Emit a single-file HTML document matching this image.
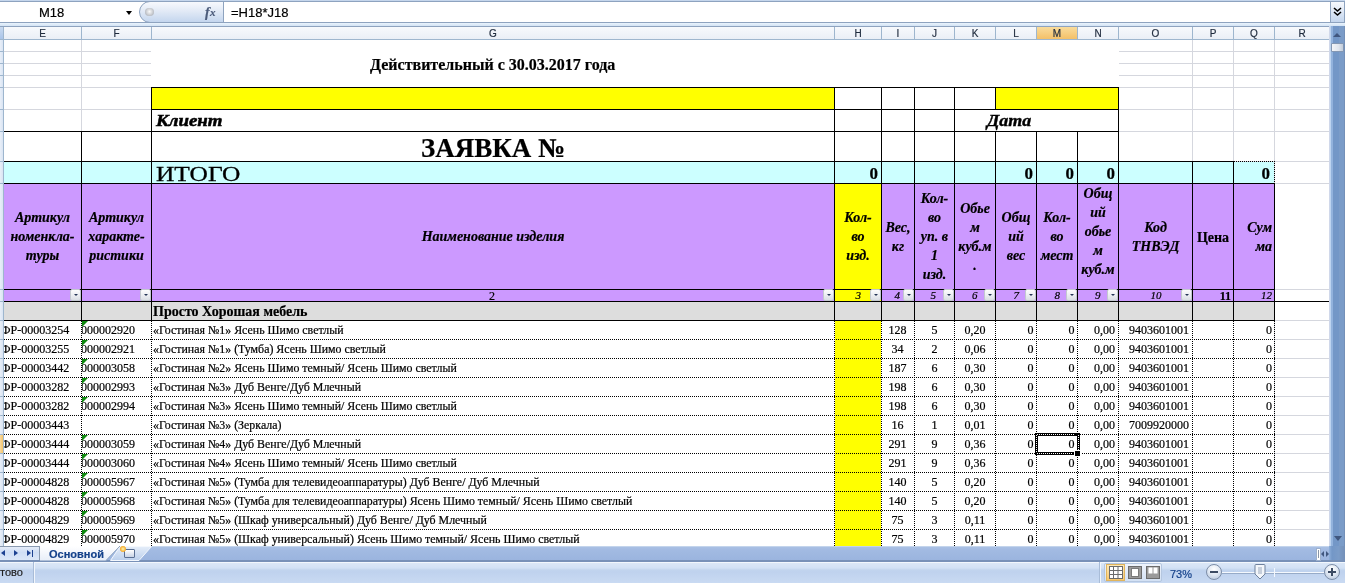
<!DOCTYPE html>
<html><head><meta charset="utf-8"><style>
html,body{margin:0;padding:0;background:#fff;}
body{width:1359px;height:583px;position:relative;overflow:hidden;}
div,svg{position:absolute;box-sizing:border-box;}
.t{white-space:nowrap;line-height:1;-webkit-text-stroke:0.2px currentColor;}
.hd{background:repeating-linear-gradient(90deg,#000 0 1px,transparent 1px 2px);}
.vd{background:repeating-linear-gradient(180deg,#000 0 1px,transparent 1px 2px);}
.bk{background:#000;}
.gl{background:#d5d7de;}
</style></head><body><div style="left:0;top:0;width:1359px;height:583px;overflow:hidden;will-change:transform">

<div style="left:0;top:0;width:1329px;height:546px;overflow:hidden">
<div style="left:0px;top:39px;width:1329px;height:507px;background:#fff"></div>
<div class="gl" style="left:4px;top:39px;width:1325px;height:1px"></div>
<div class="gl" style="left:4px;top:51px;width:1325px;height:1px"></div>
<div class="gl" style="left:4px;top:63px;width:1325px;height:1px"></div>
<div class="gl" style="left:4px;top:75px;width:1325px;height:1px"></div>
<div class="gl" style="left:4px;top:87px;width:1325px;height:1px"></div>
<div class="gl" style="left:4px;top:109px;width:1325px;height:1px"></div>
<div class="gl" style="left:4px;top:131px;width:1325px;height:1px"></div>
<div class="gl" style="left:4px;top:161px;width:1325px;height:1px"></div>
<div class="gl" style="left:4px;top:183px;width:1325px;height:1px"></div>
<div class="gl" style="left:4px;top:289px;width:1325px;height:1px"></div>
<div class="gl" style="left:4px;top:301px;width:1325px;height:1px"></div>
<div class="gl" style="left:4px;top:320px;width:1325px;height:1px"></div>
<div class="gl" style="left:4px;top:339px;width:1325px;height:1px"></div>
<div class="gl" style="left:4px;top:358px;width:1325px;height:1px"></div>
<div class="gl" style="left:4px;top:377px;width:1325px;height:1px"></div>
<div class="gl" style="left:4px;top:396px;width:1325px;height:1px"></div>
<div class="gl" style="left:4px;top:415px;width:1325px;height:1px"></div>
<div class="gl" style="left:4px;top:434px;width:1325px;height:1px"></div>
<div class="gl" style="left:4px;top:453px;width:1325px;height:1px"></div>
<div class="gl" style="left:4px;top:472px;width:1325px;height:1px"></div>
<div class="gl" style="left:4px;top:491px;width:1325px;height:1px"></div>
<div class="gl" style="left:4px;top:510px;width:1325px;height:1px"></div>
<div class="gl" style="left:4px;top:529px;width:1325px;height:1px"></div>
<div class="gl" style="left:81px;top:39px;width:1px;height:507px"></div>
<div class="gl" style="left:151px;top:39px;width:1px;height:507px"></div>
<div class="gl" style="left:834px;top:39px;width:1px;height:507px"></div>
<div class="gl" style="left:881px;top:39px;width:1px;height:507px"></div>
<div class="gl" style="left:914px;top:39px;width:1px;height:507px"></div>
<div class="gl" style="left:954px;top:39px;width:1px;height:507px"></div>
<div class="gl" style="left:995px;top:39px;width:1px;height:507px"></div>
<div class="gl" style="left:1036px;top:39px;width:1px;height:507px"></div>
<div class="gl" style="left:1077px;top:39px;width:1px;height:507px"></div>
<div class="gl" style="left:1118px;top:39px;width:1px;height:507px"></div>
<div class="gl" style="left:1192px;top:39px;width:1px;height:507px"></div>
<div class="gl" style="left:1233px;top:39px;width:1px;height:507px"></div>
<div class="gl" style="left:1274px;top:39px;width:1px;height:507px"></div>
<div style="left:151px;top:40px;width:968px;height:47px;background:#fff"></div>
<div style="left:151px;top:88px;width:967px;height:43px;background:#fff"></div>
<div style="left:152px;top:88px;width:682px;height:21px;background:#ffff00"></div>
<div style="left:996px;top:88px;width:122px;height:21px;background:#ffff00"></div>
<div style="left:152px;top:132px;width:966px;height:29px;background:#fff"></div>
<div style="left:4px;top:162px;width:1270px;height:21px;background:#ccffff"></div>
<div style="left:4px;top:184px;width:1270px;height:117px;background:#cc99ff"></div>
<div style="left:835px;top:184px;width:46px;height:117px;background:#ffff00"></div>
<div style="left:4px;top:302px;width:1270px;height:18px;background:#dddddd"></div>
<div style="left:4px;top:321px;width:1270px;height:225px;background:#fff"></div>
<div style="left:835px;top:321px;width:46px;height:225px;background:#ffff00"></div>
<div class="bk" style="left:151px;top:87px;width:968px;height:1px"></div>
<div class="bk" style="left:151px;top:109px;width:968px;height:1px"></div>
<div class="bk" style="left:4px;top:131px;width:1115px;height:1px"></div>
<div class="bk" style="left:4px;top:161px;width:1230px;height:1px"></div>
<div class="hd" style="left:1234px;top:161px;width:41px;height:1px"></div>
<div class="bk" style="left:151px;top:87px;width:1px;height:97px"></div>
<div class="bk" style="left:834px;top:87px;width:1px;height:75px"></div>
<div class="bk" style="left:881px;top:87px;width:1px;height:75px"></div>
<div class="bk" style="left:914px;top:87px;width:1px;height:75px"></div>
<div class="bk" style="left:954px;top:87px;width:1px;height:75px"></div>
<div class="bk" style="left:1118px;top:87px;width:1px;height:75px"></div>
<div class="bk" style="left:995px;top:87px;width:1px;height:23px"></div>
<div class="bk" style="left:995px;top:131px;width:1px;height:31px"></div>
<div class="bk" style="left:1036px;top:131px;width:1px;height:31px"></div>
<div class="bk" style="left:1077px;top:131px;width:1px;height:31px"></div>
<div class="bk" style="left:81px;top:131px;width:1px;height:53px"></div>
<div class="bk" style="left:834px;top:161px;width:1px;height:23px"></div>
<div class="bk" style="left:881px;top:161px;width:1px;height:23px"></div>
<div class="bk" style="left:914px;top:161px;width:1px;height:23px"></div>
<div class="bk" style="left:954px;top:161px;width:1px;height:23px"></div>
<div class="bk" style="left:995px;top:161px;width:1px;height:23px"></div>
<div class="bk" style="left:1036px;top:161px;width:1px;height:23px"></div>
<div class="bk" style="left:1077px;top:161px;width:1px;height:23px"></div>
<div class="bk" style="left:1118px;top:161px;width:1px;height:23px"></div>
<div class="bk" style="left:1192px;top:161px;width:1px;height:23px"></div>
<div class="bk" style="left:1233px;top:161px;width:1px;height:23px"></div>
<div class="vd" style="left:1274px;top:161px;width:1px;height:23px"></div>
<div class="bk" style="left:4px;top:183px;width:1271px;height:1px"></div>
<div class="bk" style="left:81px;top:183px;width:1px;height:138px"></div>
<div class="bk" style="left:151px;top:183px;width:1px;height:138px"></div>
<div class="bk" style="left:834px;top:183px;width:1px;height:138px"></div>
<div class="bk" style="left:881px;top:183px;width:1px;height:138px"></div>
<div class="bk" style="left:914px;top:183px;width:1px;height:138px"></div>
<div class="bk" style="left:954px;top:183px;width:1px;height:138px"></div>
<div class="bk" style="left:995px;top:183px;width:1px;height:138px"></div>
<div class="bk" style="left:1036px;top:183px;width:1px;height:138px"></div>
<div class="bk" style="left:1077px;top:183px;width:1px;height:138px"></div>
<div class="bk" style="left:1118px;top:183px;width:1px;height:138px"></div>
<div class="bk" style="left:1192px;top:183px;width:1px;height:138px"></div>
<div class="bk" style="left:1233px;top:183px;width:1px;height:138px"></div>
<div class="bk" style="left:1274px;top:183px;width:1px;height:138px"></div>
<div class="bk" style="left:4px;top:289px;width:1271px;height:1px"></div>
<div class="bk" style="left:0px;top:301px;width:1330px;height:1px"></div>
<div class="bk" style="left:4px;top:320px;width:1271px;height:1px"></div>
<div class="hd" style="left:4px;top:339px;width:1271px;height:1px"></div>
<div class="hd" style="left:4px;top:358px;width:1271px;height:1px"></div>
<div class="hd" style="left:4px;top:377px;width:1271px;height:1px"></div>
<div class="hd" style="left:4px;top:396px;width:1271px;height:1px"></div>
<div class="hd" style="left:4px;top:415px;width:1271px;height:1px"></div>
<div class="hd" style="left:4px;top:434px;width:1271px;height:1px"></div>
<div class="hd" style="left:4px;top:453px;width:1271px;height:1px"></div>
<div class="hd" style="left:4px;top:472px;width:1271px;height:1px"></div>
<div class="hd" style="left:4px;top:491px;width:1271px;height:1px"></div>
<div class="hd" style="left:4px;top:510px;width:1271px;height:1px"></div>
<div class="hd" style="left:4px;top:529px;width:1271px;height:1px"></div>
<div class="vd" style="left:81px;top:321px;width:1px;height:226px"></div>
<div class="vd" style="left:151px;top:321px;width:1px;height:226px"></div>
<div class="vd" style="left:834px;top:321px;width:1px;height:226px"></div>
<div class="vd" style="left:881px;top:321px;width:1px;height:226px"></div>
<div class="vd" style="left:914px;top:321px;width:1px;height:226px"></div>
<div class="vd" style="left:954px;top:321px;width:1px;height:226px"></div>
<div class="vd" style="left:995px;top:321px;width:1px;height:226px"></div>
<div class="vd" style="left:1036px;top:321px;width:1px;height:226px"></div>
<div class="vd" style="left:1077px;top:321px;width:1px;height:226px"></div>
<div class="vd" style="left:1118px;top:321px;width:1px;height:226px"></div>
<div class="vd" style="left:1192px;top:321px;width:1px;height:226px"></div>
<div class="vd" style="left:1233px;top:321px;width:1px;height:226px"></div>
<div class="vd" style="left:1274px;top:321px;width:1px;height:226px"></div>
<div style="left:70px;top:289px;width:11px;height:12px;background:linear-gradient(#fdfdfe,#dadee5);border:1px solid #c3c8d0;border-radius:2px"></div>
<div style="left:74px;top:294px;width:0;height:0;border-left:2.5px solid transparent;border-right:2.5px solid transparent;border-top:2.5px solid #243456"></div>
<div style="left:140px;top:289px;width:11px;height:12px;background:linear-gradient(#fdfdfe,#dadee5);border:1px solid #c3c8d0;border-radius:2px"></div>
<div style="left:144px;top:294px;width:0;height:0;border-left:2.5px solid transparent;border-right:2.5px solid transparent;border-top:2.5px solid #243456"></div>
<div style="left:823px;top:289px;width:11px;height:12px;background:linear-gradient(#fdfdfe,#dadee5);border:1px solid #c3c8d0;border-radius:2px"></div>
<div style="left:827px;top:294px;width:0;height:0;border-left:2.5px solid transparent;border-right:2.5px solid transparent;border-top:2.5px solid #243456"></div>
<div style="left:870px;top:289px;width:11px;height:12px;background:linear-gradient(#fdfdfe,#dadee5);border:1px solid #c3c8d0;border-radius:2px"></div>
<div style="left:874px;top:294px;width:0;height:0;border-left:2.5px solid transparent;border-right:2.5px solid transparent;border-top:2.5px solid #243456"></div>
<div style="left:903px;top:289px;width:11px;height:12px;background:linear-gradient(#fdfdfe,#dadee5);border:1px solid #c3c8d0;border-radius:2px"></div>
<div style="left:907px;top:294px;width:0;height:0;border-left:2.5px solid transparent;border-right:2.5px solid transparent;border-top:2.5px solid #243456"></div>
<div style="left:943px;top:289px;width:11px;height:12px;background:linear-gradient(#fdfdfe,#dadee5);border:1px solid #c3c8d0;border-radius:2px"></div>
<div style="left:947px;top:294px;width:0;height:0;border-left:2.5px solid transparent;border-right:2.5px solid transparent;border-top:2.5px solid #243456"></div>
<div style="left:984px;top:289px;width:11px;height:12px;background:linear-gradient(#fdfdfe,#dadee5);border:1px solid #c3c8d0;border-radius:2px"></div>
<div style="left:988px;top:294px;width:0;height:0;border-left:2.5px solid transparent;border-right:2.5px solid transparent;border-top:2.5px solid #243456"></div>
<div style="left:1025px;top:289px;width:11px;height:12px;background:linear-gradient(#fdfdfe,#dadee5);border:1px solid #c3c8d0;border-radius:2px"></div>
<div style="left:1029px;top:294px;width:0;height:0;border-left:2.5px solid transparent;border-right:2.5px solid transparent;border-top:2.5px solid #243456"></div>
<div style="left:1066px;top:289px;width:11px;height:12px;background:linear-gradient(#fdfdfe,#dadee5);border:1px solid #c3c8d0;border-radius:2px"></div>
<div style="left:1070px;top:294px;width:0;height:0;border-left:2.5px solid transparent;border-right:2.5px solid transparent;border-top:2.5px solid #243456"></div>
<div style="left:1107px;top:289px;width:11px;height:12px;background:linear-gradient(#fdfdfe,#dadee5);border:1px solid #c3c8d0;border-radius:2px"></div>
<div style="left:1111px;top:294px;width:0;height:0;border-left:2.5px solid transparent;border-right:2.5px solid transparent;border-top:2.5px solid #243456"></div>
<div style="left:1181px;top:289px;width:11px;height:12px;background:linear-gradient(#fdfdfe,#dadee5);border:1px solid #c3c8d0;border-radius:2px"></div>
<div style="left:1185px;top:294px;width:0;height:0;border-left:2.5px solid transparent;border-right:2.5px solid transparent;border-top:2.5px solid #243456"></div>
<div class="t" style="left:370px;top:57px;font-family:'Liberation Serif', serif;font-size:16px;font-weight:bold;font-style:normal;color:#000;">Действительный с 30.03.2017 года</div>
<div class="t" style="left:156px;top:113px;font-family:'Liberation Serif', serif;font-size:16px;font-weight:bold;font-style:italic;color:#000;transform:scaleX(1.18);transform-origin:0 0;-webkit-text-stroke:0.5px #000">Клиент</div>
<div class="t" style="left:987px;top:113px;font-family:'Liberation Serif', serif;font-size:16px;font-weight:bold;font-style:italic;color:#000;transform:scaleX(1.12);transform-origin:0 0;-webkit-text-stroke:0.4px #000">Дата</div>
<div class="t" style="left:193px;width:600px;text-align:center;top:135px;font-family:'Liberation Serif', serif;font-size:27px;font-weight:bold;font-style:normal;color:#000;">ЗАЯВКА №</div>
<div class="t" style="left:156px;top:163px;font-family:'Liberation Serif', serif;font-size:22px;font-weight:normal;font-style:normal;color:#000;transform:scaleX(1.155);transform-origin:0 0;-webkit-text-stroke:0.3px #000">ИТОГО</div>
<div class="t" style="left:378px;width:500px;text-align:right;top:165px;font-family:'Liberation Serif', serif;font-size:17px;font-weight:bold;font-style:normal;color:#000;">0</div>
<div class="t" style="left:533px;width:500px;text-align:right;top:165px;font-family:'Liberation Serif', serif;font-size:17px;font-weight:bold;font-style:normal;color:#000;">0</div>
<div class="t" style="left:574px;width:500px;text-align:right;top:165px;font-family:'Liberation Serif', serif;font-size:17px;font-weight:bold;font-style:normal;color:#000;">0</div>
<div class="t" style="left:615px;width:500px;text-align:right;top:165px;font-family:'Liberation Serif', serif;font-size:17px;font-weight:bold;font-style:normal;color:#000;">0</div>
<div class="t" style="left:770px;width:500px;text-align:right;top:165px;font-family:'Liberation Serif', serif;font-size:17px;font-weight:bold;font-style:normal;color:#000;">0</div>
<div class="t" style="left:-257.5px;width:600px;text-align:center;top:211px;font-family:'Liberation Serif', serif;font-size:14px;font-weight:bold;font-style:italic;color:#000;">Артикул</div>
<div class="t" style="left:-257.5px;width:600px;text-align:center;top:230px;font-family:'Liberation Serif', serif;font-size:14px;font-weight:bold;font-style:italic;color:#000;">номенкла-</div>
<div class="t" style="left:-257.5px;width:600px;text-align:center;top:249px;font-family:'Liberation Serif', serif;font-size:14px;font-weight:bold;font-style:italic;color:#000;">туры</div>
<div class="t" style="left:-183.5px;width:600px;text-align:center;top:211px;font-family:'Liberation Serif', serif;font-size:14px;font-weight:bold;font-style:italic;color:#000;">Артикул</div>
<div class="t" style="left:-183.5px;width:600px;text-align:center;top:230px;font-family:'Liberation Serif', serif;font-size:14px;font-weight:bold;font-style:italic;color:#000;">характе-</div>
<div class="t" style="left:-183.5px;width:600px;text-align:center;top:249px;font-family:'Liberation Serif', serif;font-size:14px;font-weight:bold;font-style:italic;color:#000;">ристики</div>
<div class="t" style="left:193.0px;width:600px;text-align:center;top:230px;font-family:'Liberation Serif', serif;font-size:14px;font-weight:bold;font-style:italic;color:#000;">Наименование изделия</div>
<div class="t" style="left:558.0px;width:600px;text-align:center;top:211px;font-family:'Liberation Serif', serif;font-size:14px;font-weight:bold;font-style:italic;color:#000;">Кол-</div>
<div class="t" style="left:558.0px;width:600px;text-align:center;top:230px;font-family:'Liberation Serif', serif;font-size:14px;font-weight:bold;font-style:italic;color:#000;">во</div>
<div class="t" style="left:558.0px;width:600px;text-align:center;top:249px;font-family:'Liberation Serif', serif;font-size:14px;font-weight:bold;font-style:italic;color:#000;">изд.</div>
<div class="t" style="left:598.0px;width:600px;text-align:center;top:221px;font-family:'Liberation Serif', serif;font-size:14px;font-weight:bold;font-style:italic;color:#000;">Вес,</div>
<div class="t" style="left:598.0px;width:600px;text-align:center;top:240px;font-family:'Liberation Serif', serif;font-size:14px;font-weight:bold;font-style:italic;color:#000;">кг</div>
<div class="t" style="left:634.5px;width:600px;text-align:center;top:192px;font-family:'Liberation Serif', serif;font-size:14px;font-weight:bold;font-style:italic;color:#000;">Кол-</div>
<div class="t" style="left:634.5px;width:600px;text-align:center;top:211px;font-family:'Liberation Serif', serif;font-size:14px;font-weight:bold;font-style:italic;color:#000;">во</div>
<div class="t" style="left:634.5px;width:600px;text-align:center;top:230px;font-family:'Liberation Serif', serif;font-size:14px;font-weight:bold;font-style:italic;color:#000;">уп. в</div>
<div class="t" style="left:634.5px;width:600px;text-align:center;top:249px;font-family:'Liberation Serif', serif;font-size:14px;font-weight:bold;font-style:italic;color:#000;">1</div>
<div class="t" style="left:634.5px;width:600px;text-align:center;top:268px;font-family:'Liberation Serif', serif;font-size:14px;font-weight:bold;font-style:italic;color:#000;">изд.</div>
<div class="t" style="left:675.0px;width:600px;text-align:center;top:202px;font-family:'Liberation Serif', serif;font-size:14px;font-weight:bold;font-style:italic;color:#000;">Обье</div>
<div class="t" style="left:675.0px;width:600px;text-align:center;top:221px;font-family:'Liberation Serif', serif;font-size:14px;font-weight:bold;font-style:italic;color:#000;">м</div>
<div class="t" style="left:675.0px;width:600px;text-align:center;top:240px;font-family:'Liberation Serif', serif;font-size:14px;font-weight:bold;font-style:italic;color:#000;">куб.м</div>
<div class="t" style="left:675.0px;width:600px;text-align:center;top:259px;font-family:'Liberation Serif', serif;font-size:14px;font-weight:bold;font-style:italic;color:#000;">.</div>
<div class="t" style="left:716.0px;width:600px;text-align:center;top:211px;font-family:'Liberation Serif', serif;font-size:14px;font-weight:bold;font-style:italic;color:#000;">Общ</div>
<div class="t" style="left:716.0px;width:600px;text-align:center;top:230px;font-family:'Liberation Serif', serif;font-size:14px;font-weight:bold;font-style:italic;color:#000;">ий</div>
<div class="t" style="left:716.0px;width:600px;text-align:center;top:249px;font-family:'Liberation Serif', serif;font-size:14px;font-weight:bold;font-style:italic;color:#000;">вес</div>
<div class="t" style="left:757.0px;width:600px;text-align:center;top:211px;font-family:'Liberation Serif', serif;font-size:14px;font-weight:bold;font-style:italic;color:#000;">Кол-</div>
<div class="t" style="left:757.0px;width:600px;text-align:center;top:230px;font-family:'Liberation Serif', serif;font-size:14px;font-weight:bold;font-style:italic;color:#000;">во</div>
<div class="t" style="left:757.0px;width:600px;text-align:center;top:249px;font-family:'Liberation Serif', serif;font-size:14px;font-weight:bold;font-style:italic;color:#000;">мест</div>
<div class="t" style="left:798.0px;width:600px;text-align:center;top:187px;font-family:'Liberation Serif', serif;font-size:14px;font-weight:bold;font-style:italic;color:#000;">Общ</div>
<div class="t" style="left:798.0px;width:600px;text-align:center;top:206px;font-family:'Liberation Serif', serif;font-size:14px;font-weight:bold;font-style:italic;color:#000;">ий</div>
<div class="t" style="left:798.0px;width:600px;text-align:center;top:225px;font-family:'Liberation Serif', serif;font-size:14px;font-weight:bold;font-style:italic;color:#000;">обье</div>
<div class="t" style="left:798.0px;width:600px;text-align:center;top:244px;font-family:'Liberation Serif', serif;font-size:14px;font-weight:bold;font-style:italic;color:#000;">м</div>
<div class="t" style="left:798.0px;width:600px;text-align:center;top:263px;font-family:'Liberation Serif', serif;font-size:14px;font-weight:bold;font-style:italic;color:#000;">куб.м</div>
<div class="t" style="left:855.5px;width:600px;text-align:center;top:221px;font-family:'Liberation Serif', serif;font-size:14px;font-weight:bold;font-style:italic;color:#000;">Код</div>
<div class="t" style="left:855.5px;width:600px;text-align:center;top:240px;font-family:'Liberation Serif', serif;font-size:14px;font-weight:bold;font-style:italic;color:#000;">ТНВЭД</div>
<div class="t" style="left:913.0px;width:600px;text-align:center;top:231px;font-family:'Liberation Serif', serif;font-size:14px;font-weight:bold;font-style:normal;color:#000;">Цена</div>
<div class="t" style="left:772px;width:500px;text-align:right;top:221px;font-family:'Liberation Serif', serif;font-size:14px;font-weight:bold;font-style:italic;color:#000;">Сум</div>
<div class="t" style="left:772px;width:500px;text-align:right;top:240px;font-family:'Liberation Serif', serif;font-size:14px;font-weight:bold;font-style:italic;color:#000;">ма</div>
<div class="t" style="left:192px;width:600px;text-align:center;top:290px;font-family:'Liberation Serif', serif;font-size:12px;font-weight:normal;font-style:normal;color:#000;">2</div>
<div class="t" style="left:361px;width:500px;text-align:right;top:290px;font-family:'Liberation Serif', serif;font-size:11px;font-weight:normal;font-style:italic;color:#000;">3</div>
<div class="t" style="left:400px;width:500px;text-align:right;top:290px;font-family:'Liberation Serif', serif;font-size:11px;font-weight:normal;font-style:italic;color:#000;">4</div>
<div class="t" style="left:436px;width:500px;text-align:right;top:290px;font-family:'Liberation Serif', serif;font-size:11px;font-weight:normal;font-style:italic;color:#000;">5</div>
<div class="t" style="left:477.5px;width:500px;text-align:right;top:290px;font-family:'Liberation Serif', serif;font-size:11px;font-weight:normal;font-style:italic;color:#000;">6</div>
<div class="t" style="left:519px;width:500px;text-align:right;top:290px;font-family:'Liberation Serif', serif;font-size:11px;font-weight:normal;font-style:italic;color:#000;">7</div>
<div class="t" style="left:560px;width:500px;text-align:right;top:290px;font-family:'Liberation Serif', serif;font-size:11px;font-weight:normal;font-style:italic;color:#000;">8</div>
<div class="t" style="left:600.5px;width:500px;text-align:right;top:290px;font-family:'Liberation Serif', serif;font-size:11px;font-weight:normal;font-style:italic;color:#000;">9</div>
<div class="t" style="left:856px;width:600px;text-align:center;top:290px;font-family:'Liberation Serif', serif;font-size:11px;font-weight:normal;font-style:italic;color:#000;">10</div>
<div class="t" style="left:731px;width:500px;text-align:right;top:290px;font-family:'Liberation Serif', serif;font-size:12px;font-weight:bold;font-style:normal;color:#000;">11</div>
<div class="t" style="left:772px;width:500px;text-align:right;top:290px;font-family:'Liberation Serif', serif;font-size:11px;font-weight:normal;font-style:italic;color:#000;">12</div>
<div class="t" style="left:153px;top:305px;font-family:'Liberation Serif', serif;font-size:14px;font-weight:bold;font-style:normal;color:#000;">Просто Хорошая мебель</div>
<div style="left:4px;top:321px;width:77px;height:18px;overflow:hidden"><div class="t" style="left:-3px;top:3px;font-family:'Liberation Serif', serif;font-size:12px">ФР-00003254</div></div>
<div style="left:82px;top:321px;width:69px;height:18px;overflow:hidden"><div class="t" style="right:16px;top:3px;font-family:'Liberation Serif', serif;font-size:12px">000002920</div></div>
<div style="left:82px;top:321px;width:0;height:0;border-top:6px solid #108a10;border-right:6px solid transparent"></div>
<div class="t" style="left:153px;top:325px;font-family:'Liberation Serif', serif;font-size:11.9px;font-weight:normal;font-style:normal;color:#000;">«Гостиная №1» Ясень Шимо светлый</div>
<div class="t" style="left:597.5px;width:600px;text-align:center;top:324px;font-family:'Liberation Serif', serif;font-size:12px;font-weight:normal;font-style:normal;color:#000;">128</div>
<div class="t" style="left:634.5px;width:600px;text-align:center;top:324px;font-family:'Liberation Serif', serif;font-size:12px;font-weight:normal;font-style:normal;color:#000;">5</div>
<div class="t" style="left:675px;width:600px;text-align:center;top:324px;font-family:'Liberation Serif', serif;font-size:12px;font-weight:normal;font-style:normal;color:#000;">0,20</div>
<div class="t" style="left:533.5px;width:500px;text-align:right;top:324px;font-family:'Liberation Serif', serif;font-size:12px;font-weight:normal;font-style:normal;color:#000;">0</div>
<div class="t" style="left:574.5px;width:500px;text-align:right;top:324px;font-family:'Liberation Serif', serif;font-size:12px;font-weight:normal;font-style:normal;color:#000;">0</div>
<div class="t" style="left:615px;width:500px;text-align:right;top:324px;font-family:'Liberation Serif', serif;font-size:12px;font-weight:normal;font-style:normal;color:#000;">0,00</div>
<div class="t" style="left:859px;width:600px;text-align:center;top:324px;font-family:'Liberation Serif', serif;font-size:12px;font-weight:normal;font-style:normal;color:#000;">9403601001</div>
<div class="t" style="left:772px;width:500px;text-align:right;top:324px;font-family:'Liberation Serif', serif;font-size:12px;font-weight:normal;font-style:normal;color:#000;">0</div>
<div style="left:4px;top:340px;width:77px;height:18px;overflow:hidden"><div class="t" style="left:-3px;top:3px;font-family:'Liberation Serif', serif;font-size:12px">ФР-00003255</div></div>
<div style="left:82px;top:340px;width:69px;height:18px;overflow:hidden"><div class="t" style="right:16px;top:3px;font-family:'Liberation Serif', serif;font-size:12px">000002921</div></div>
<div style="left:82px;top:340px;width:0;height:0;border-top:6px solid #108a10;border-right:6px solid transparent"></div>
<div class="t" style="left:153px;top:344px;font-family:'Liberation Serif', serif;font-size:11.9px;font-weight:normal;font-style:normal;color:#000;">«Гостиная №1» (Тумба) Ясень Шимо светлый</div>
<div class="t" style="left:597.5px;width:600px;text-align:center;top:343px;font-family:'Liberation Serif', serif;font-size:12px;font-weight:normal;font-style:normal;color:#000;">34</div>
<div class="t" style="left:634.5px;width:600px;text-align:center;top:343px;font-family:'Liberation Serif', serif;font-size:12px;font-weight:normal;font-style:normal;color:#000;">2</div>
<div class="t" style="left:675px;width:600px;text-align:center;top:343px;font-family:'Liberation Serif', serif;font-size:12px;font-weight:normal;font-style:normal;color:#000;">0,06</div>
<div class="t" style="left:533.5px;width:500px;text-align:right;top:343px;font-family:'Liberation Serif', serif;font-size:12px;font-weight:normal;font-style:normal;color:#000;">0</div>
<div class="t" style="left:574.5px;width:500px;text-align:right;top:343px;font-family:'Liberation Serif', serif;font-size:12px;font-weight:normal;font-style:normal;color:#000;">0</div>
<div class="t" style="left:615px;width:500px;text-align:right;top:343px;font-family:'Liberation Serif', serif;font-size:12px;font-weight:normal;font-style:normal;color:#000;">0,00</div>
<div class="t" style="left:859px;width:600px;text-align:center;top:343px;font-family:'Liberation Serif', serif;font-size:12px;font-weight:normal;font-style:normal;color:#000;">9403601001</div>
<div class="t" style="left:772px;width:500px;text-align:right;top:343px;font-family:'Liberation Serif', serif;font-size:12px;font-weight:normal;font-style:normal;color:#000;">0</div>
<div style="left:4px;top:359px;width:77px;height:18px;overflow:hidden"><div class="t" style="left:-3px;top:3px;font-family:'Liberation Serif', serif;font-size:12px">ФР-00003442</div></div>
<div style="left:82px;top:359px;width:69px;height:18px;overflow:hidden"><div class="t" style="right:16px;top:3px;font-family:'Liberation Serif', serif;font-size:12px">000003058</div></div>
<div style="left:82px;top:359px;width:0;height:0;border-top:6px solid #108a10;border-right:6px solid transparent"></div>
<div class="t" style="left:153px;top:363px;font-family:'Liberation Serif', serif;font-size:11.9px;font-weight:normal;font-style:normal;color:#000;">«Гостиная №2» Ясень Шимо темный/ Ясень Шимо светлый</div>
<div class="t" style="left:597.5px;width:600px;text-align:center;top:362px;font-family:'Liberation Serif', serif;font-size:12px;font-weight:normal;font-style:normal;color:#000;">187</div>
<div class="t" style="left:634.5px;width:600px;text-align:center;top:362px;font-family:'Liberation Serif', serif;font-size:12px;font-weight:normal;font-style:normal;color:#000;">6</div>
<div class="t" style="left:675px;width:600px;text-align:center;top:362px;font-family:'Liberation Serif', serif;font-size:12px;font-weight:normal;font-style:normal;color:#000;">0,30</div>
<div class="t" style="left:533.5px;width:500px;text-align:right;top:362px;font-family:'Liberation Serif', serif;font-size:12px;font-weight:normal;font-style:normal;color:#000;">0</div>
<div class="t" style="left:574.5px;width:500px;text-align:right;top:362px;font-family:'Liberation Serif', serif;font-size:12px;font-weight:normal;font-style:normal;color:#000;">0</div>
<div class="t" style="left:615px;width:500px;text-align:right;top:362px;font-family:'Liberation Serif', serif;font-size:12px;font-weight:normal;font-style:normal;color:#000;">0,00</div>
<div class="t" style="left:859px;width:600px;text-align:center;top:362px;font-family:'Liberation Serif', serif;font-size:12px;font-weight:normal;font-style:normal;color:#000;">9403601001</div>
<div class="t" style="left:772px;width:500px;text-align:right;top:362px;font-family:'Liberation Serif', serif;font-size:12px;font-weight:normal;font-style:normal;color:#000;">0</div>
<div style="left:4px;top:378px;width:77px;height:18px;overflow:hidden"><div class="t" style="left:-3px;top:3px;font-family:'Liberation Serif', serif;font-size:12px">ФР-00003282</div></div>
<div style="left:82px;top:378px;width:69px;height:18px;overflow:hidden"><div class="t" style="right:16px;top:3px;font-family:'Liberation Serif', serif;font-size:12px">000002993</div></div>
<div style="left:82px;top:378px;width:0;height:0;border-top:6px solid #108a10;border-right:6px solid transparent"></div>
<div class="t" style="left:153px;top:382px;font-family:'Liberation Serif', serif;font-size:11.9px;font-weight:normal;font-style:normal;color:#000;">«Гостиная №3» Дуб Венге/Дуб Млечный</div>
<div class="t" style="left:597.5px;width:600px;text-align:center;top:381px;font-family:'Liberation Serif', serif;font-size:12px;font-weight:normal;font-style:normal;color:#000;">198</div>
<div class="t" style="left:634.5px;width:600px;text-align:center;top:381px;font-family:'Liberation Serif', serif;font-size:12px;font-weight:normal;font-style:normal;color:#000;">6</div>
<div class="t" style="left:675px;width:600px;text-align:center;top:381px;font-family:'Liberation Serif', serif;font-size:12px;font-weight:normal;font-style:normal;color:#000;">0,30</div>
<div class="t" style="left:533.5px;width:500px;text-align:right;top:381px;font-family:'Liberation Serif', serif;font-size:12px;font-weight:normal;font-style:normal;color:#000;">0</div>
<div class="t" style="left:574.5px;width:500px;text-align:right;top:381px;font-family:'Liberation Serif', serif;font-size:12px;font-weight:normal;font-style:normal;color:#000;">0</div>
<div class="t" style="left:615px;width:500px;text-align:right;top:381px;font-family:'Liberation Serif', serif;font-size:12px;font-weight:normal;font-style:normal;color:#000;">0,00</div>
<div class="t" style="left:859px;width:600px;text-align:center;top:381px;font-family:'Liberation Serif', serif;font-size:12px;font-weight:normal;font-style:normal;color:#000;">9403601001</div>
<div class="t" style="left:772px;width:500px;text-align:right;top:381px;font-family:'Liberation Serif', serif;font-size:12px;font-weight:normal;font-style:normal;color:#000;">0</div>
<div style="left:4px;top:397px;width:77px;height:18px;overflow:hidden"><div class="t" style="left:-3px;top:3px;font-family:'Liberation Serif', serif;font-size:12px">ФР-00003282</div></div>
<div style="left:82px;top:397px;width:69px;height:18px;overflow:hidden"><div class="t" style="right:16px;top:3px;font-family:'Liberation Serif', serif;font-size:12px">000002994</div></div>
<div style="left:82px;top:397px;width:0;height:0;border-top:6px solid #108a10;border-right:6px solid transparent"></div>
<div class="t" style="left:153px;top:401px;font-family:'Liberation Serif', serif;font-size:11.9px;font-weight:normal;font-style:normal;color:#000;">«Гостиная №3» Ясень Шимо темный/ Ясень Шимо светлый</div>
<div class="t" style="left:597.5px;width:600px;text-align:center;top:400px;font-family:'Liberation Serif', serif;font-size:12px;font-weight:normal;font-style:normal;color:#000;">198</div>
<div class="t" style="left:634.5px;width:600px;text-align:center;top:400px;font-family:'Liberation Serif', serif;font-size:12px;font-weight:normal;font-style:normal;color:#000;">6</div>
<div class="t" style="left:675px;width:600px;text-align:center;top:400px;font-family:'Liberation Serif', serif;font-size:12px;font-weight:normal;font-style:normal;color:#000;">0,30</div>
<div class="t" style="left:533.5px;width:500px;text-align:right;top:400px;font-family:'Liberation Serif', serif;font-size:12px;font-weight:normal;font-style:normal;color:#000;">0</div>
<div class="t" style="left:574.5px;width:500px;text-align:right;top:400px;font-family:'Liberation Serif', serif;font-size:12px;font-weight:normal;font-style:normal;color:#000;">0</div>
<div class="t" style="left:615px;width:500px;text-align:right;top:400px;font-family:'Liberation Serif', serif;font-size:12px;font-weight:normal;font-style:normal;color:#000;">0,00</div>
<div class="t" style="left:859px;width:600px;text-align:center;top:400px;font-family:'Liberation Serif', serif;font-size:12px;font-weight:normal;font-style:normal;color:#000;">9403601001</div>
<div class="t" style="left:772px;width:500px;text-align:right;top:400px;font-family:'Liberation Serif', serif;font-size:12px;font-weight:normal;font-style:normal;color:#000;">0</div>
<div style="left:4px;top:416px;width:77px;height:18px;overflow:hidden"><div class="t" style="left:-3px;top:3px;font-family:'Liberation Serif', serif;font-size:12px">ФР-00003443</div></div>
<div class="t" style="left:153px;top:420px;font-family:'Liberation Serif', serif;font-size:11.9px;font-weight:normal;font-style:normal;color:#000;">«Гостиная №3» (Зеркала)</div>
<div class="t" style="left:597.5px;width:600px;text-align:center;top:419px;font-family:'Liberation Serif', serif;font-size:12px;font-weight:normal;font-style:normal;color:#000;">16</div>
<div class="t" style="left:634.5px;width:600px;text-align:center;top:419px;font-family:'Liberation Serif', serif;font-size:12px;font-weight:normal;font-style:normal;color:#000;">1</div>
<div class="t" style="left:675px;width:600px;text-align:center;top:419px;font-family:'Liberation Serif', serif;font-size:12px;font-weight:normal;font-style:normal;color:#000;">0,01</div>
<div class="t" style="left:533.5px;width:500px;text-align:right;top:419px;font-family:'Liberation Serif', serif;font-size:12px;font-weight:normal;font-style:normal;color:#000;">0</div>
<div class="t" style="left:574.5px;width:500px;text-align:right;top:419px;font-family:'Liberation Serif', serif;font-size:12px;font-weight:normal;font-style:normal;color:#000;">0</div>
<div class="t" style="left:615px;width:500px;text-align:right;top:419px;font-family:'Liberation Serif', serif;font-size:12px;font-weight:normal;font-style:normal;color:#000;">0,00</div>
<div class="t" style="left:859px;width:600px;text-align:center;top:419px;font-family:'Liberation Serif', serif;font-size:12px;font-weight:normal;font-style:normal;color:#000;">7009920000</div>
<div class="t" style="left:772px;width:500px;text-align:right;top:419px;font-family:'Liberation Serif', serif;font-size:12px;font-weight:normal;font-style:normal;color:#000;">0</div>
<div style="left:4px;top:435px;width:77px;height:18px;overflow:hidden"><div class="t" style="left:-3px;top:3px;font-family:'Liberation Serif', serif;font-size:12px">ФР-00003444</div></div>
<div style="left:82px;top:435px;width:69px;height:18px;overflow:hidden"><div class="t" style="right:16px;top:3px;font-family:'Liberation Serif', serif;font-size:12px">000003059</div></div>
<div style="left:82px;top:435px;width:0;height:0;border-top:6px solid #108a10;border-right:6px solid transparent"></div>
<div class="t" style="left:153px;top:439px;font-family:'Liberation Serif', serif;font-size:11.9px;font-weight:normal;font-style:normal;color:#000;">«Гостиная №4» Дуб Венге/Дуб Млечный</div>
<div class="t" style="left:597.5px;width:600px;text-align:center;top:438px;font-family:'Liberation Serif', serif;font-size:12px;font-weight:normal;font-style:normal;color:#000;">291</div>
<div class="t" style="left:634.5px;width:600px;text-align:center;top:438px;font-family:'Liberation Serif', serif;font-size:12px;font-weight:normal;font-style:normal;color:#000;">9</div>
<div class="t" style="left:675px;width:600px;text-align:center;top:438px;font-family:'Liberation Serif', serif;font-size:12px;font-weight:normal;font-style:normal;color:#000;">0,36</div>
<div class="t" style="left:533.5px;width:500px;text-align:right;top:438px;font-family:'Liberation Serif', serif;font-size:12px;font-weight:normal;font-style:normal;color:#000;">0</div>
<div class="t" style="left:574.5px;width:500px;text-align:right;top:438px;font-family:'Liberation Serif', serif;font-size:12px;font-weight:normal;font-style:normal;color:#000;">0</div>
<div class="t" style="left:615px;width:500px;text-align:right;top:438px;font-family:'Liberation Serif', serif;font-size:12px;font-weight:normal;font-style:normal;color:#000;">0,00</div>
<div class="t" style="left:859px;width:600px;text-align:center;top:438px;font-family:'Liberation Serif', serif;font-size:12px;font-weight:normal;font-style:normal;color:#000;">9403601001</div>
<div class="t" style="left:772px;width:500px;text-align:right;top:438px;font-family:'Liberation Serif', serif;font-size:12px;font-weight:normal;font-style:normal;color:#000;">0</div>
<div style="left:4px;top:454px;width:77px;height:18px;overflow:hidden"><div class="t" style="left:-3px;top:3px;font-family:'Liberation Serif', serif;font-size:12px">ФР-00003444</div></div>
<div style="left:82px;top:454px;width:69px;height:18px;overflow:hidden"><div class="t" style="right:16px;top:3px;font-family:'Liberation Serif', serif;font-size:12px">000003060</div></div>
<div style="left:82px;top:454px;width:0;height:0;border-top:6px solid #108a10;border-right:6px solid transparent"></div>
<div class="t" style="left:153px;top:458px;font-family:'Liberation Serif', serif;font-size:11.9px;font-weight:normal;font-style:normal;color:#000;">«Гостиная №4» Ясень Шимо темный/ Ясень Шимо светлый</div>
<div class="t" style="left:597.5px;width:600px;text-align:center;top:457px;font-family:'Liberation Serif', serif;font-size:12px;font-weight:normal;font-style:normal;color:#000;">291</div>
<div class="t" style="left:634.5px;width:600px;text-align:center;top:457px;font-family:'Liberation Serif', serif;font-size:12px;font-weight:normal;font-style:normal;color:#000;">9</div>
<div class="t" style="left:675px;width:600px;text-align:center;top:457px;font-family:'Liberation Serif', serif;font-size:12px;font-weight:normal;font-style:normal;color:#000;">0,36</div>
<div class="t" style="left:533.5px;width:500px;text-align:right;top:457px;font-family:'Liberation Serif', serif;font-size:12px;font-weight:normal;font-style:normal;color:#000;">0</div>
<div class="t" style="left:574.5px;width:500px;text-align:right;top:457px;font-family:'Liberation Serif', serif;font-size:12px;font-weight:normal;font-style:normal;color:#000;">0</div>
<div class="t" style="left:615px;width:500px;text-align:right;top:457px;font-family:'Liberation Serif', serif;font-size:12px;font-weight:normal;font-style:normal;color:#000;">0,00</div>
<div class="t" style="left:859px;width:600px;text-align:center;top:457px;font-family:'Liberation Serif', serif;font-size:12px;font-weight:normal;font-style:normal;color:#000;">9403601001</div>
<div class="t" style="left:772px;width:500px;text-align:right;top:457px;font-family:'Liberation Serif', serif;font-size:12px;font-weight:normal;font-style:normal;color:#000;">0</div>
<div style="left:4px;top:473px;width:77px;height:18px;overflow:hidden"><div class="t" style="left:-3px;top:3px;font-family:'Liberation Serif', serif;font-size:12px">ФР-00004828</div></div>
<div style="left:82px;top:473px;width:69px;height:18px;overflow:hidden"><div class="t" style="right:16px;top:3px;font-family:'Liberation Serif', serif;font-size:12px">000005967</div></div>
<div style="left:82px;top:473px;width:0;height:0;border-top:6px solid #108a10;border-right:6px solid transparent"></div>
<div class="t" style="left:153px;top:477px;font-family:'Liberation Serif', serif;font-size:11.9px;font-weight:normal;font-style:normal;color:#000;">«Гостиная №5» (Тумба для телевидеоаппаратуры) Дуб Венге/ Дуб Млечный</div>
<div class="t" style="left:597.5px;width:600px;text-align:center;top:476px;font-family:'Liberation Serif', serif;font-size:12px;font-weight:normal;font-style:normal;color:#000;">140</div>
<div class="t" style="left:634.5px;width:600px;text-align:center;top:476px;font-family:'Liberation Serif', serif;font-size:12px;font-weight:normal;font-style:normal;color:#000;">5</div>
<div class="t" style="left:675px;width:600px;text-align:center;top:476px;font-family:'Liberation Serif', serif;font-size:12px;font-weight:normal;font-style:normal;color:#000;">0,20</div>
<div class="t" style="left:533.5px;width:500px;text-align:right;top:476px;font-family:'Liberation Serif', serif;font-size:12px;font-weight:normal;font-style:normal;color:#000;">0</div>
<div class="t" style="left:574.5px;width:500px;text-align:right;top:476px;font-family:'Liberation Serif', serif;font-size:12px;font-weight:normal;font-style:normal;color:#000;">0</div>
<div class="t" style="left:615px;width:500px;text-align:right;top:476px;font-family:'Liberation Serif', serif;font-size:12px;font-weight:normal;font-style:normal;color:#000;">0,00</div>
<div class="t" style="left:859px;width:600px;text-align:center;top:476px;font-family:'Liberation Serif', serif;font-size:12px;font-weight:normal;font-style:normal;color:#000;">9403601001</div>
<div class="t" style="left:772px;width:500px;text-align:right;top:476px;font-family:'Liberation Serif', serif;font-size:12px;font-weight:normal;font-style:normal;color:#000;">0</div>
<div style="left:4px;top:492px;width:77px;height:18px;overflow:hidden"><div class="t" style="left:-3px;top:3px;font-family:'Liberation Serif', serif;font-size:12px">ФР-00004828</div></div>
<div style="left:82px;top:492px;width:69px;height:18px;overflow:hidden"><div class="t" style="right:16px;top:3px;font-family:'Liberation Serif', serif;font-size:12px">000005968</div></div>
<div style="left:82px;top:492px;width:0;height:0;border-top:6px solid #108a10;border-right:6px solid transparent"></div>
<div class="t" style="left:153px;top:496px;font-family:'Liberation Serif', serif;font-size:11.9px;font-weight:normal;font-style:normal;color:#000;">«Гостиная №5» (Тумба для телевидеоаппаратуры) Ясень Шимо темный/ Ясень Шимо светлый</div>
<div class="t" style="left:597.5px;width:600px;text-align:center;top:495px;font-family:'Liberation Serif', serif;font-size:12px;font-weight:normal;font-style:normal;color:#000;">140</div>
<div class="t" style="left:634.5px;width:600px;text-align:center;top:495px;font-family:'Liberation Serif', serif;font-size:12px;font-weight:normal;font-style:normal;color:#000;">5</div>
<div class="t" style="left:675px;width:600px;text-align:center;top:495px;font-family:'Liberation Serif', serif;font-size:12px;font-weight:normal;font-style:normal;color:#000;">0,20</div>
<div class="t" style="left:533.5px;width:500px;text-align:right;top:495px;font-family:'Liberation Serif', serif;font-size:12px;font-weight:normal;font-style:normal;color:#000;">0</div>
<div class="t" style="left:574.5px;width:500px;text-align:right;top:495px;font-family:'Liberation Serif', serif;font-size:12px;font-weight:normal;font-style:normal;color:#000;">0</div>
<div class="t" style="left:615px;width:500px;text-align:right;top:495px;font-family:'Liberation Serif', serif;font-size:12px;font-weight:normal;font-style:normal;color:#000;">0,00</div>
<div class="t" style="left:859px;width:600px;text-align:center;top:495px;font-family:'Liberation Serif', serif;font-size:12px;font-weight:normal;font-style:normal;color:#000;">9403601001</div>
<div class="t" style="left:772px;width:500px;text-align:right;top:495px;font-family:'Liberation Serif', serif;font-size:12px;font-weight:normal;font-style:normal;color:#000;">0</div>
<div style="left:4px;top:511px;width:77px;height:18px;overflow:hidden"><div class="t" style="left:-3px;top:3px;font-family:'Liberation Serif', serif;font-size:12px">ФР-00004829</div></div>
<div style="left:82px;top:511px;width:69px;height:18px;overflow:hidden"><div class="t" style="right:16px;top:3px;font-family:'Liberation Serif', serif;font-size:12px">000005969</div></div>
<div style="left:82px;top:511px;width:0;height:0;border-top:6px solid #108a10;border-right:6px solid transparent"></div>
<div class="t" style="left:153px;top:515px;font-family:'Liberation Serif', serif;font-size:11.9px;font-weight:normal;font-style:normal;color:#000;">«Гостиная №5» (Шкаф универсальный) Дуб Венге/ Дуб Млечный</div>
<div class="t" style="left:597.5px;width:600px;text-align:center;top:514px;font-family:'Liberation Serif', serif;font-size:12px;font-weight:normal;font-style:normal;color:#000;">75</div>
<div class="t" style="left:634.5px;width:600px;text-align:center;top:514px;font-family:'Liberation Serif', serif;font-size:12px;font-weight:normal;font-style:normal;color:#000;">3</div>
<div class="t" style="left:675px;width:600px;text-align:center;top:514px;font-family:'Liberation Serif', serif;font-size:12px;font-weight:normal;font-style:normal;color:#000;">0,11</div>
<div class="t" style="left:533.5px;width:500px;text-align:right;top:514px;font-family:'Liberation Serif', serif;font-size:12px;font-weight:normal;font-style:normal;color:#000;">0</div>
<div class="t" style="left:574.5px;width:500px;text-align:right;top:514px;font-family:'Liberation Serif', serif;font-size:12px;font-weight:normal;font-style:normal;color:#000;">0</div>
<div class="t" style="left:615px;width:500px;text-align:right;top:514px;font-family:'Liberation Serif', serif;font-size:12px;font-weight:normal;font-style:normal;color:#000;">0,00</div>
<div class="t" style="left:859px;width:600px;text-align:center;top:514px;font-family:'Liberation Serif', serif;font-size:12px;font-weight:normal;font-style:normal;color:#000;">9403601001</div>
<div class="t" style="left:772px;width:500px;text-align:right;top:514px;font-family:'Liberation Serif', serif;font-size:12px;font-weight:normal;font-style:normal;color:#000;">0</div>
<div style="left:4px;top:530px;width:77px;height:18px;overflow:hidden"><div class="t" style="left:-3px;top:3px;font-family:'Liberation Serif', serif;font-size:12px">ФР-00004829</div></div>
<div style="left:82px;top:530px;width:69px;height:18px;overflow:hidden"><div class="t" style="right:16px;top:3px;font-family:'Liberation Serif', serif;font-size:12px">000005970</div></div>
<div style="left:82px;top:530px;width:0;height:0;border-top:6px solid #108a10;border-right:6px solid transparent"></div>
<div class="t" style="left:153px;top:534px;font-family:'Liberation Serif', serif;font-size:11.9px;font-weight:normal;font-style:normal;color:#000;">«Гостиная №5» (Шкаф универсальный) Ясень Шимо темный/ Ясень Шимо светлый</div>
<div class="t" style="left:597.5px;width:600px;text-align:center;top:533px;font-family:'Liberation Serif', serif;font-size:12px;font-weight:normal;font-style:normal;color:#000;">75</div>
<div class="t" style="left:634.5px;width:600px;text-align:center;top:533px;font-family:'Liberation Serif', serif;font-size:12px;font-weight:normal;font-style:normal;color:#000;">3</div>
<div class="t" style="left:675px;width:600px;text-align:center;top:533px;font-family:'Liberation Serif', serif;font-size:12px;font-weight:normal;font-style:normal;color:#000;">0,11</div>
<div class="t" style="left:533.5px;width:500px;text-align:right;top:533px;font-family:'Liberation Serif', serif;font-size:12px;font-weight:normal;font-style:normal;color:#000;">0</div>
<div class="t" style="left:574.5px;width:500px;text-align:right;top:533px;font-family:'Liberation Serif', serif;font-size:12px;font-weight:normal;font-style:normal;color:#000;">0</div>
<div class="t" style="left:615px;width:500px;text-align:right;top:533px;font-family:'Liberation Serif', serif;font-size:12px;font-weight:normal;font-style:normal;color:#000;">0,00</div>
<div class="t" style="left:859px;width:600px;text-align:center;top:533px;font-family:'Liberation Serif', serif;font-size:12px;font-weight:normal;font-style:normal;color:#000;">9403601001</div>
<div class="t" style="left:772px;width:500px;text-align:right;top:533px;font-family:'Liberation Serif', serif;font-size:12px;font-weight:normal;font-style:normal;color:#000;">0</div>
<div style="left:1035px;top:433px;width:45px;height:22px;border:3px solid #000"></div>
<div style="left:1037px;top:434px;width:38px;height:1px;background:repeating-linear-gradient(90deg,#fff 0 1px,transparent 1px 2px)"></div>
<div style="left:1037px;top:453px;width:36px;height:1px;background:repeating-linear-gradient(90deg,#fff 0 1px,transparent 1px 2px)"></div>
<div style="left:1036px;top:435px;width:1px;height:18px;background:repeating-linear-gradient(180deg,#fff 0 1px,transparent 1px 2px)"></div>
<div style="left:1078px;top:435px;width:1px;height:15px;background:repeating-linear-gradient(180deg,#fff 0 1px,transparent 1px 2px)"></div>
<div style="left:1074px;top:450px;width:7px;height:7px;background:#000;border:1px solid #fff"></div>
</div>
<div style="left:0px;top:40px;width:3px;height:506px;background:linear-gradient(90deg,#e9eff8,#d9e4f3)"></div>
<div style="left:3px;top:39px;width:1px;height:507px;background:#9eb6ce"></div>
<div style="left:0px;top:39px;width:3px;height:1px;background:#9eb6ce"></div>
<div style="left:0px;top:51px;width:3px;height:1px;background:#9eb6ce"></div>
<div style="left:0px;top:63px;width:3px;height:1px;background:#9eb6ce"></div>
<div style="left:0px;top:75px;width:3px;height:1px;background:#9eb6ce"></div>
<div style="left:0px;top:87px;width:3px;height:1px;background:#9eb6ce"></div>
<div style="left:0px;top:109px;width:3px;height:1px;background:#9eb6ce"></div>
<div style="left:0px;top:131px;width:3px;height:1px;background:#9eb6ce"></div>
<div style="left:0px;top:161px;width:3px;height:1px;background:#9eb6ce"></div>
<div style="left:0px;top:183px;width:3px;height:1px;background:#9eb6ce"></div>
<div style="left:0px;top:289px;width:3px;height:1px;background:#9eb6ce"></div>
<div style="left:0px;top:301px;width:3px;height:1px;background:#9eb6ce"></div>
<div style="left:0px;top:320px;width:3px;height:1px;background:#9eb6ce"></div>
<div style="left:0px;top:339px;width:3px;height:1px;background:#9eb6ce"></div>
<div style="left:0px;top:358px;width:3px;height:1px;background:#9eb6ce"></div>
<div style="left:0px;top:377px;width:3px;height:1px;background:#9eb6ce"></div>
<div style="left:0px;top:396px;width:3px;height:1px;background:#9eb6ce"></div>
<div style="left:0px;top:415px;width:3px;height:1px;background:#9eb6ce"></div>
<div style="left:0px;top:434px;width:3px;height:1px;background:#9eb6ce"></div>
<div style="left:0px;top:453px;width:3px;height:1px;background:#9eb6ce"></div>
<div style="left:0px;top:472px;width:3px;height:1px;background:#9eb6ce"></div>
<div style="left:0px;top:491px;width:3px;height:1px;background:#9eb6ce"></div>
<div style="left:0px;top:510px;width:3px;height:1px;background:#9eb6ce"></div>
<div style="left:0px;top:529px;width:3px;height:1px;background:#9eb6ce"></div>
<div style="left:0px;top:435px;width:3px;height:18px;background:linear-gradient(90deg,#f9d99f,#f3c46a)"></div>
<div style="left:0px;top:26px;width:1329px;height:14px;background:linear-gradient(#f8fafd,#e9eef6)"></div>
<div style="left:0px;top:26px;width:1345px;height:1px;background:#8ea3bf"></div>
<div style="left:0px;top:39px;width:1329px;height:1px;background:#9eb6ce"></div>
<div style="left:0px;top:27px;width:3px;height:12px;background:linear-gradient(#c9daf0,#a9c4e9)"></div>
<div style="left:3px;top:27px;width:1px;height:12px;background:#9eb6ce"></div>
<div style="left:1037px;top:27px;width:40px;height:12px;background:linear-gradient(#f9dc9c,#f3c068)"></div>
<div style="left:81px;top:27px;width:1px;height:12px;background:#9eb6ce"></div>
<div style="left:151px;top:27px;width:1px;height:12px;background:#9eb6ce"></div>
<div style="left:834px;top:27px;width:1px;height:12px;background:#9eb6ce"></div>
<div style="left:881px;top:27px;width:1px;height:12px;background:#9eb6ce"></div>
<div style="left:914px;top:27px;width:1px;height:12px;background:#9eb6ce"></div>
<div style="left:954px;top:27px;width:1px;height:12px;background:#9eb6ce"></div>
<div style="left:995px;top:27px;width:1px;height:12px;background:#9eb6ce"></div>
<div style="left:1036px;top:27px;width:1px;height:12px;background:#9eb6ce"></div>
<div style="left:1077px;top:27px;width:1px;height:12px;background:#9eb6ce"></div>
<div style="left:1118px;top:27px;width:1px;height:12px;background:#9eb6ce"></div>
<div style="left:1192px;top:27px;width:1px;height:12px;background:#9eb6ce"></div>
<div style="left:1233px;top:27px;width:1px;height:12px;background:#9eb6ce"></div>
<div style="left:1274px;top:27px;width:1px;height:12px;background:#9eb6ce"></div>
<div style="left:1329px;top:27px;width:1px;height:12px;background:#9eb6ce"></div>
<div class="t" style="left:-257.5px;width:600px;text-align:center;top:29px;font-family:'Liberation Sans', sans-serif;font-size:10px;font-weight:normal;font-style:normal;color:#1f2b3d;">E</div>
<div class="t" style="left:-183.5px;width:600px;text-align:center;top:29px;font-family:'Liberation Sans', sans-serif;font-size:10px;font-weight:normal;font-style:normal;color:#1f2b3d;">F</div>
<div class="t" style="left:193.0px;width:600px;text-align:center;top:29px;font-family:'Liberation Sans', sans-serif;font-size:10px;font-weight:normal;font-style:normal;color:#1f2b3d;">G</div>
<div class="t" style="left:558.0px;width:600px;text-align:center;top:29px;font-family:'Liberation Sans', sans-serif;font-size:10px;font-weight:normal;font-style:normal;color:#1f2b3d;">H</div>
<div class="t" style="left:598.0px;width:600px;text-align:center;top:29px;font-family:'Liberation Sans', sans-serif;font-size:10px;font-weight:normal;font-style:normal;color:#1f2b3d;">I</div>
<div class="t" style="left:634.5px;width:600px;text-align:center;top:29px;font-family:'Liberation Sans', sans-serif;font-size:10px;font-weight:normal;font-style:normal;color:#1f2b3d;">J</div>
<div class="t" style="left:675.0px;width:600px;text-align:center;top:29px;font-family:'Liberation Sans', sans-serif;font-size:10px;font-weight:normal;font-style:normal;color:#1f2b3d;">K</div>
<div class="t" style="left:716.0px;width:600px;text-align:center;top:29px;font-family:'Liberation Sans', sans-serif;font-size:10px;font-weight:normal;font-style:normal;color:#1f2b3d;">L</div>
<div class="t" style="left:757.0px;width:600px;text-align:center;top:29px;font-family:'Liberation Sans', sans-serif;font-size:10px;font-weight:normal;font-style:normal;color:#1f2b3d;">M</div>
<div class="t" style="left:798.0px;width:600px;text-align:center;top:29px;font-family:'Liberation Sans', sans-serif;font-size:10px;font-weight:normal;font-style:normal;color:#1f2b3d;">N</div>
<div class="t" style="left:855.5px;width:600px;text-align:center;top:29px;font-family:'Liberation Sans', sans-serif;font-size:10px;font-weight:normal;font-style:normal;color:#1f2b3d;">O</div>
<div class="t" style="left:913.0px;width:600px;text-align:center;top:29px;font-family:'Liberation Sans', sans-serif;font-size:10px;font-weight:normal;font-style:normal;color:#1f2b3d;">P</div>
<div class="t" style="left:954.0px;width:600px;text-align:center;top:29px;font-family:'Liberation Sans', sans-serif;font-size:10px;font-weight:normal;font-style:normal;color:#1f2b3d;">Q</div>
<div class="t" style="left:1002.0px;width:600px;text-align:center;top:29px;font-family:'Liberation Sans', sans-serif;font-size:10px;font-weight:normal;font-style:normal;color:#1f2b3d;">R</div>
<div style="left:0px;top:0px;width:1345px;height:1px;background:#c5d6ec"></div>
<div style="left:0px;top:1px;width:1345px;height:1px;background:#8ea3bf"></div>
<div style="left:0px;top:2px;width:1345px;height:20px;background:#fff"></div>
<div style="left:0px;top:22px;width:1345px;height:1px;background:#8ea3bf"></div>
<div style="left:0px;top:23px;width:1345px;height:3px;background:linear-gradient(#eaf4fd,#d3e3f4)"></div>
<div class="t" style="left:39px;top:6px;font-family:'Liberation Sans', sans-serif;font-size:13px;font-weight:normal;font-style:normal;color:#000;">M18</div>
<div style="left:126px;top:11px;width:0;height:0;border-left:3.5px solid transparent;border-right:3.5px solid transparent;border-top:4px solid #000"></div>
<div style="left:139px;top:1px;width:85px;height:22px;border:1px solid #8ea3bf;border-radius:11px 0 0 11px;background:linear-gradient(#f7f9fd,#e2eaf6 45%,#c4d6ee)"></div>
<div style="left:145px;top:7.5px;width:8.5px;height:8.5px;border-radius:50%;background:radial-gradient(circle at 50% 45%,#fafafa 0,#d6d8dc 40%,#9da2aa 100%)"></div>
<div class="t" style="left:205px;top:6px;font-family:'Liberation Serif', serif;font-size:14px;font-weight:bold;font-style:italic;color:#4b5b7a;">f</div>
<div class="t" style="left:210px;top:7px;font-family:'Liberation Serif', serif;font-size:11px;font-weight:bold;font-style:italic;color:#4b5b7a;">x</div>
<div class="t" style="left:231px;top:6px;font-family:'Liberation Sans', sans-serif;font-size:13px;font-weight:normal;font-style:normal;color:#000;">=H18*J18</div>
<div style="left:1330px;top:1px;width:15px;height:22px;border:1px solid #8ea3bf;background:linear-gradient(#f7f9fd,#c4d6ee)"></div>
<svg style="left:1333px;top:7px" width="10" height="10"><polyline points="1,1 4.5,4 8,1" fill="none" stroke="#000" stroke-width="1.6"/><polyline points="1,5 4.5,8 8,5" fill="none" stroke="#000" stroke-width="1.6"/></svg>
<div style="left:1329px;top:26px;width:16px;height:535px;background:linear-gradient(90deg,#d0d8ea 0 1px,#bdd4f0 1px 2px,#92b2dc 2px 4px,#7397c7 4px 10px,#7b9cc8 10px 15px,#7490b8 15px 16px)"></div>
<div style="left:1333px;top:33px;width:0;height:0;border-left:4.5px solid transparent;border-right:4.5px solid transparent;border-bottom:4px solid #40577f"></div>
<div style="left:1331px;top:43px;width:13px;height:9px;background:linear-gradient(90deg,#f3f5f8,#dfe5ee 60%,#c2ccda);border:1px solid #8397b3;border-radius:1px"></div>
<div style="left:1334px;top:536px;width:0;height:0;border-left:4.5px solid transparent;border-right:4.5px solid transparent;border-top:5px solid #40577f"></div>
<div style="left:1345px;top:0px;width:14px;height:583px;background:#fff"></div>
<div style="left:0px;top:546px;width:1345px;height:15px;background:linear-gradient(#c3d4ec 0,#c3d4ec 1px,#a9c0e4 1px,#a2bae2 4px,#9ab4de 100%)"></div>
<div style="left:1329px;top:546px;width:16px;height:14px;background:linear-gradient(90deg,#8fb0db 0,#7397c7 3px,#7b9cc8 60%,#7490b8 100%)"></div>
<div style="left:0px;top:560px;width:1345px;height:2px;background:#7891b8"></div>
<div style="left:0px;top:546px;width:40px;height:14px;background:linear-gradient(#e9eff9,#cfdef5 45%,#dbe7f8)"></div>
<div style="left:0px;top:546px;width:40px;height:1px;background:#8a9ab0"></div>
<div style="left:39px;top:546px;width:1px;height:14px;background:#8a9ab0"></div>
<div style="left:1px;top:550px;width:0;height:0;border-top:3.5px solid transparent;border-bottom:3.5px solid transparent;border-right:4px solid #1c4191"></div>
<div style="left:14px;top:550px;width:0;height:0;border-top:3.5px solid transparent;border-bottom:3.5px solid transparent;border-left:4px solid #1c4191"></div>
<div style="left:27px;top:550px;width:0;height:0;border-top:3.5px solid transparent;border-bottom:3.5px solid transparent;border-left:4px solid #1c4191"></div>
<div style="left:32px;top:550px;width:1px;height:7px;background:#1c4191"></div>
<svg style="left:38px;top:545px" width="120" height="17"><defs><linearGradient id="ta" x1="0" y1="0" x2="0" y2="1"><stop offset="0" stop-color="#ffffff"/><stop offset="1" stop-color="#e8eef8"/></linearGradient><linearGradient id="tb" x1="0" y1="0" x2="0" y2="1"><stop offset="0" stop-color="#e4edf9"/><stop offset="1" stop-color="#bcd0ec"/></linearGradient></defs><polygon points="2,1 82,1 68,15.5 2,15.5" fill="url(#ta)"/><polygon points="82,1.5 113.5,1.5 101,15.5 72.5,15.5" fill="url(#tb)" stroke="#f4f8fd" stroke-width="1"/><line x1="82" y1="1" x2="68" y2="15.5" stroke="#8ea3bf"/></svg>
<div class="t" style="left:49px;top:549px;font-family:'Liberation Sans', sans-serif;font-size:11px;font-weight:bold;font-style:normal;color:#15428b;">Основной</div>
<div style="left:124px;top:549px;width:11px;height:9px;border:1px solid #5a7094;border-radius:1px;background:linear-gradient(#fff,#c9d4e6)"></div>
<div style="left:120px;top:546px;width:6px;height:6px;border-radius:50%;background:radial-gradient(#fff6b0,#f5a623 70%,transparent 72%)"></div>
<div style="left:1316px;top:548px;width:5px;height:13px;background:#fff;border:1px solid #9db0cc"></div>
<div style="left:1318px;top:550px;width:1px;height:8px;background:#8a96a8"></div>
<div style="left:1321px;top:551px;width:0;height:0;border-top:3px solid transparent;border-bottom:3px solid transparent;border-right:3px solid #40577f"></div>
<div style="left:1326px;top:551px;width:0;height:0;border-top:3px solid transparent;border-bottom:3px solid transparent;border-left:3px solid #40577f"></div>
<div style="left:0px;top:562px;width:1345px;height:21px;background:linear-gradient(#f2f7fd 0,#f2f7fd 1px,#dbe7f7 1px,#d2e1f5 6px,#c1d4ee 8px,#bfd2ee 10px,#c9daf2 100%)"></div>
<div style="left:33px;top:562px;width:1px;height:21px;background:#a8bcd8"></div>
<div style="left:34px;top:562px;width:1px;height:21px;background:#f1f6fc"></div>
<div class="t" style="left:0px;top:567px;font-family:'Liberation Sans', sans-serif;font-size:11px;font-weight:normal;font-style:normal;color:#1e1e1e;">тово</div>
<div style="left:1099px;top:562px;width:1px;height:21px;background:#a8bcd8"></div>
<div style="left:1100px;top:562px;width:1px;height:21px;background:#f1f6fc"></div>
<div style="left:1104px;top:563px;width:58px;height:19px;background:linear-gradient(#eef3fb,#d3e1f4);border:1px solid #b5c7e0;border-radius:2px"></div>
<div style="left:1106px;top:564px;width:19px;height:17px;background:linear-gradient(#fde9b8,#f8c870);border:1px solid #e0b45c"></div>
<svg style="left:1109px;top:566px" width="14" height="13"><rect x="0.5" y="0.5" width="13" height="12" fill="#fff" stroke="#6b6b6b"/><path d="M0.5 4.5H13.5M0.5 8.5H13.5M4.5 0.5V12.5M9 0.5V12.5" stroke="#6b6b6b"/></svg>
<svg style="left:1128px;top:566px" width="14" height="13"><rect x="0.5" y="0.5" width="13" height="12" fill="#9a9a9a" stroke="#6b6b6b"/><rect x="3.5" y="2.5" width="7" height="8" fill="#fff" stroke="#7b7b7b"/></svg>
<svg style="left:1146px;top:566px" width="14" height="13"><rect x="0.5" y="0.5" width="13" height="12" fill="#9a9a9a" stroke="#6b6b6b"/><rect x="2.5" y="1.5" width="4" height="6" fill="#fff"/><rect x="7.5" y="1.5" width="4" height="6" fill="#fff"/></svg>
<div class="t" style="left:1170px;top:569px;font-family:'Liberation Sans', sans-serif;font-size:11px;font-weight:normal;font-style:normal;color:#15428b;">73%</div>
<div style="left:1206px;top:564px;width:16px;height:16px;border-radius:50%;border:1px solid #7d8ea8;background:radial-gradient(circle at 50% 30%,#ffffff,#dfe7f2 50%,#b3c3da)"></div>
<div style="left:1210px;top:571px;width:8px;height:2px;background:#3c4b63"></div>
<div style="left:1222px;top:572px;width:102px;height:1px;background:#f4f8fd"></div>
<div style="left:1222px;top:573px;width:102px;height:1px;background:#97abc8"></div>
<svg style="left:1254px;top:564px" width="12" height="16"><path d="M1 1.5Q1 0.5 2 0.5H10Q11 0.5 11 1.5V10L6 15L1 10Z" fill="#f3f6fa" stroke="#6f819d"/><path d="M5 3V10M7 3V10" stroke="#9aa8bd"/></svg>
<div style="left:1274px;top:568px;width:1px;height:9px;background:#f4f8fd"></div>
<div style="left:1324px;top:564px;width:16px;height:16px;border-radius:50%;border:1px solid #7d8ea8;background:radial-gradient(circle at 50% 30%,#ffffff,#dfe7f2 50%,#b3c3da)"></div>
<div style="left:1328px;top:571px;width:8px;height:2px;background:#3c4b63"></div>
<div style="left:1331px;top:568px;width:2px;height:8px;background:#3c4b63"></div>
</div></body></html>
